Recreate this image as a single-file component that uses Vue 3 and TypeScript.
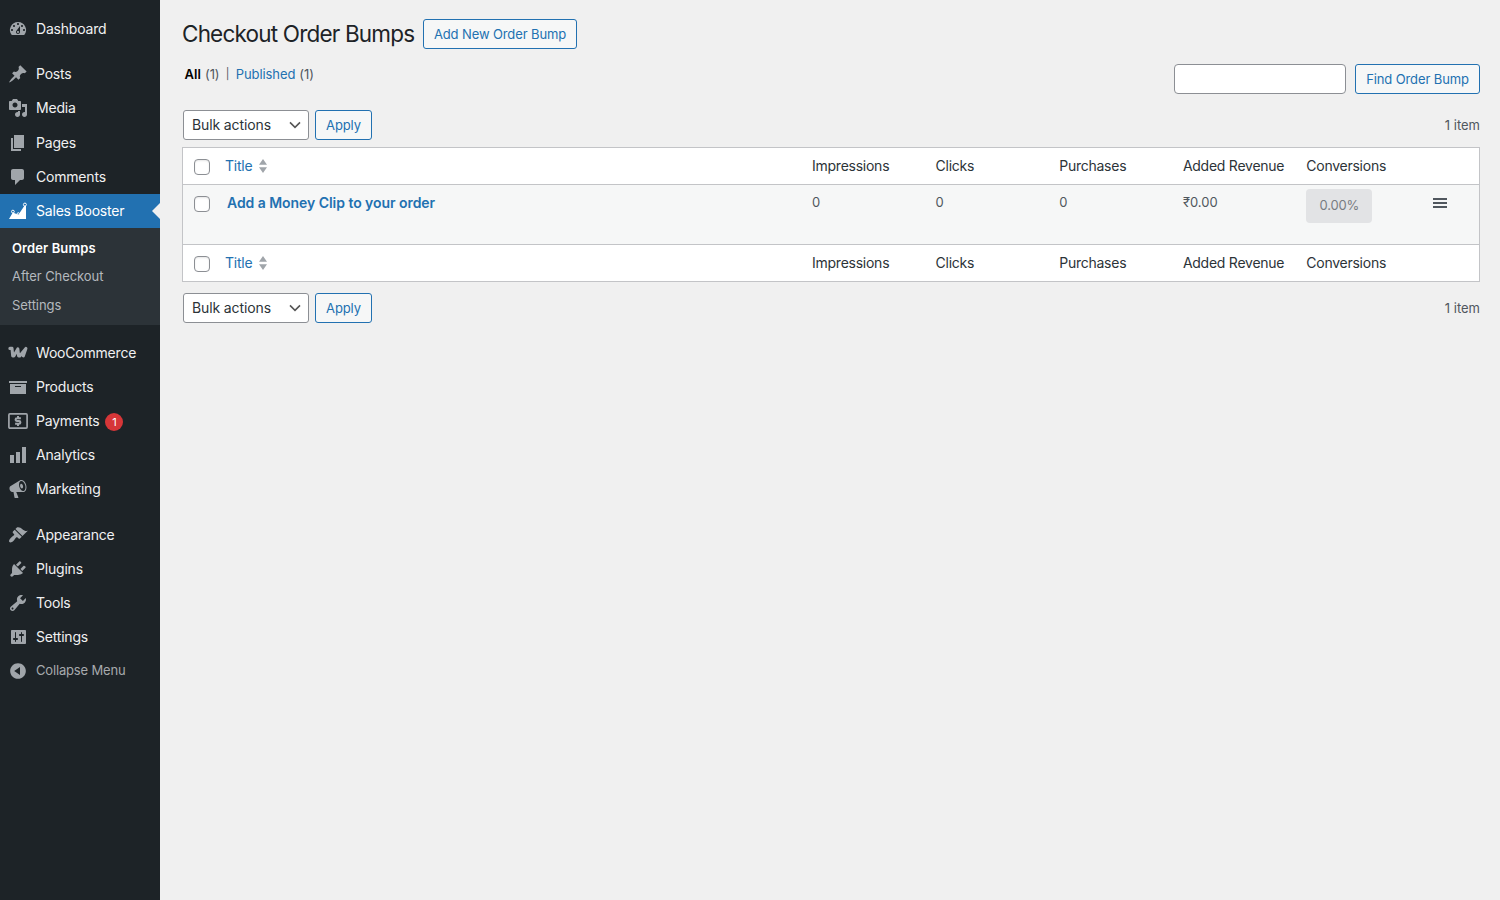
<script setup lang="ts">
interface MenuItem {
  label: string
  icon: string
  badge?: number
}

const icons: Record<string, string> = {
  dashboard:
    'M3.76 16h12.48A7.998 7.998 0 0 0 10 3a7.998 7.998 0 0 0-6.24 13zM10 4c.55 0 1 .45 1 1s-.45 1-1 1-1-.45-1-1 .45-1 1-1zM6 6c.55 0 1 .45 1 1s-.45 1-1 1-1-.45-1-1 .45-1 1-1zm8 0c.55 0 1 .45 1 1s-.45 1-1 1-1-.45-1-1 .45-1 1-1zm-5.37 5.55L12 7v6c0 1.1-.9 2-2 2s-2-.9-2-2c0-.57.24-1.08.63-1.45zM4 10c.55 0 1 .45 1 1s-.45 1-1 1-1-.45-1-1 .45-1 1-1zm12 0c.55 0 1 .45 1 1s-.45 1-1 1-1-.45-1-1 .45-1 1-1zm-5 3c0-.55-.45-1-1-1s-1 .45-1 1 .45 1 1 1 1-.45 1-1z',
  post: 'M10.44 3.02l1.82-1.82 6.36 6.35-1.83 1.82c-1.05-.68-2.48-.57-3.41.36l-.75.75c-.92.93-1.04 2.35-.35 3.41l-1.83 1.82-2.41-2.41-2.8 2.79c-.42.42-3.38 2.71-3.8 2.29s1.86-3.39 2.28-3.81l2.79-2.79L4.1 9.36l1.83-1.82c1.05.69 2.48.57 3.4-.36l.75-.75c.93-.92 1.05-2.35.36-3.41z',
  media:
    'M13 11V4c0-.55-.45-1-1-1h-1.67L9 1H5L3.67 3H2c-.55 0-1 .45-1 1v7c0 .55.45 1 1 1h10c.55 0 1-.45 1-1zM7 4.5c1.38 0 2.5 1.12 2.5 2.5S8.38 9.5 7 9.5 4.5 8.38 4.5 7 5.62 4.5 7 4.5zM14 6h5v10.5c0 1.38-1.12 2.5-2.5 2.5S14 17.88 14 16.5s1.12-2.5 2.5-2.5c.17 0 .34.02.5.05V9h-3V6zm-4 8.05V13h2v3.5c0 1.38-1.12 2.5-2.5 2.5S7 17.88 7 16.5 8.12 14 9.5 14c.17 0 .34.02.5.05z',
  page: 'M6 15V2h10v13H6zm-1 1h8v2H3V5h2v11z',
  comments: 'M5 2h9c1.1 0 2 .9 2 2v7c0 1.1-.9 2-2 2h-2l-5 5v-5H5c-1.1 0-2-.9-2-2V4c0-1.1.9-2 2-2z',
  archive: 'M19 4v2H1V4h18zM2 7h16v10H2V7zm11 3V9H7v1h6z',
  bars: 'M18 18V2h-4v16h4zm-6 0V7H8v11h4zm-6 0v-8H2v8h4z',
  megaphone:
    'M18.15 5.94c.46 1.62.38 3.22-.02 4.48-.42 1.28-1.26 2.18-2.3 2.48-.16.06-.26.06-.4.06-.06.02-.12.02-.18.02-.06.02-.14.02-.22.02h-6.8l2.22 5.5c.02.14-.06.26-.14.34-.08.1-.24.16-.34.16H6.95c-.1 0-.26-.06-.34-.16-.08-.08-.16-.2-.14-.34l-1-5.5H4.25l-.02-.02c-.5.06-1.08-.18-1.54-.62s-.88-1.08-1.06-1.88c-.24-.8-.2-1.56-.02-2.2.18-.62.58-1.08 1.06-1.3l.02-.02 9-5.4c.1-.06.18-.1.24-.16.06-.04.14-.08.24-.12.16-.08.28-.12.5-.18 1.04-.3 2.24.1 3.22.98s1.84 2.24 2.26 3.86zm-2.58 5.98h-.02c.4-.1.74-.34 1.04-.7.58-.7.86-1.76.86-3.04 0-.64-.1-1.3-.28-1.98-.34-1.36-1.02-2.5-1.78-3.24s-1.68-1.1-2.46-.88c-.82.22-1.4.96-1.7 2-.32 1.04-.28 2.36.06 3.72.38 1.36 1 2.5 1.8 3.24.78.74 1.62 1.1 2.48.88zm-2.54-7.08c.22-.04.42-.02.62.04.38.16.76.48 1.02 1s.42 1.2.42 1.78c0 .3-.04.56-.12.8-.18.48-.44.84-.86.94-.34.1-.8-.06-1.14-.4s-.64-.86-.78-1.5c-.18-.62-.12-1.24.02-1.72s.48-.84.82-.94z',
  appearance:
    'M14.48 11.06L7.41 3.99l1.5-1.5c.5-.56 2.3-.47 3.51.32 1.21.8 1.43 1.28 2.91 2.1 1.18.64 2.45 1.26 4.45.85zm-.71.71L6.7 4.7 4.93 6.47c-.39.39-.39 1.02 0 1.41l1.06 1.06c.39.39.39 1.03 0 1.42-.6.6-1.43 1.11-2.21 1.69-.35.26-.7.53-1.01.84C1.43 14.23.4 16.08 1.4 17.07c.99 1 2.84-.03 4.18-1.36.31-.31.58-.66.85-1.02.57-.78 1.08-1.61 1.69-2.21.39-.39 1.02-.39 1.41 0l1.06 1.06c.39.39 1.02.39 1.41 0z',
  plugins:
    'M13.11 4.36L9.87 7.6 8 5.73l3.24-3.24c.35-.34 1.05-.2 1.56.32.52.51.66 1.21.31 1.55zm-8 1.77l.91-1.12 9.01 9.01-1.19.84c-.71.71-2.63 1.16-3.82 1.16H6.14L4.9 17.26c-.59.59-1.54.59-2.12 0-.59-.58-.59-1.53 0-2.12l1.24-1.24v-3.88c0-1.13.4-3.19 1.09-3.89zm7.26 3.97l3.24-3.24c.34-.35 1.04-.21 1.55.31.52.51.66 1.21.31 1.55l-3.24 3.25z',
  tools:
    'M16.68 9.77c-1.34 1.34-3.3 1.67-4.95.99l-5.41 6.52c-.99.99-2.59.99-3.58 0s-.99-2.59 0-3.57l6.52-5.42c-.68-1.65-.35-3.61.99-4.95 1.28-1.28 3.12-1.62 4.72-1.06l-2.89 2.89 2.82 2.82 2.86-2.87c.53 1.58.18 3.39-1.08 4.65zM3.81 16.21c.4.39 1.04.39 1.43 0 .4-.4.4-1.04 0-1.43-.39-.4-1.03-.4-1.43 0-.39.39-.39 1.03 0 1.43z',
  settings:
    'M18 16V4c0-.55-.45-1-1-1H4c-.55 0-1 .45-1 1v12c0 .55.45 1 1 1h13c.55 0 1-.45 1-1zM8 11h1c.55 0 1 .45 1 1s-.45 1-1 1H8v1.5c0 .28-.22.5-.5.5s-.5-.22-.5-.5V13H6c-.55 0-1-.45-1-1s.45-1 1-1h1V5.5c0-.28.22-.5.5-.5s.5.22.5.5V11zm5-2h-1c-.55 0-1-.45-1-1s.45-1 1-1h1V5.5c0-.28.22-.5.5-.5s.5.22.5.5V7h1c.55 0 1 .45 1 1s-.45 1-1 1h-1v5.5c0 .28-.22.5-.5.5s-.5-.22-.5-.5V9z',
  collapse:
    'M10 2.16c4.33 0 7.84 3.51 7.84 7.84s-3.51 7.84-7.84 7.84S2.16 14.33 2.16 10 5.71 2.16 10 2.16zm2 11.72V6.12L6.18 9.97z',
}

const contentMenu: MenuItem[] = [
  { label: 'Posts', icon: 'post' },
  { label: 'Media', icon: 'media' },
  { label: 'Pages', icon: 'page' },
  { label: 'Comments', icon: 'comments' },
]
const storeMenu: MenuItem[] = [
  { label: 'WooCommerce', icon: 'woo' },
  { label: 'Products', icon: 'archive' },
  { label: 'Payments', icon: 'payments', badge: 1 },
  { label: 'Analytics', icon: 'bars' },
  { label: 'Marketing', icon: 'megaphone' },
]
const systemMenu: MenuItem[] = [
  { label: 'Appearance', icon: 'appearance' },
  { label: 'Plugins', icon: 'plugins' },
  { label: 'Tools', icon: 'tools' },
  { label: 'Settings', icon: 'settings' },
]
const groups = [
  { name: 'posts', items: contentMenu },
  { name: 'store', items: storeMenu },
  { name: 'system', items: systemMenu },
]
const submenu = ['Order Bumps', 'After Checkout', 'Settings']
const columns = ['Impressions', 'Clicks', 'Purchases', 'Added Revenue', 'Conversions']
const rowValues = ['0', '0', '0', '₹0.00']
</script>

<template>
  <div class="admin">
    <nav class="sidebar">
      <a class="item first">
        <svg class="icon" viewBox="0 0 20 20"><path :d="icons.dashboard" /></svg>
        <span>Dashboard</span>
      </a>
      <div v-for="group in groups" :key="group.name" class="group" :class="group.name">
        <a v-for="item in group.items" :key="item.label" class="item">
          <svg v-if="item.icon === 'woo'" class="icon" viewBox="0 0 20 20">
            <path
              class="woo"
              d="M1.9 5.4H4L4.7 12.9H5.8L9.8 5.9L10.6 12.9H11.7L17.9 5.4L15.3 12.9"
            />
          </svg>
          <svg v-else-if="item.icon === 'payments'" class="icon" viewBox="0 0 20 20">
            <rect class="line" x="0.9" y="2.9" width="18.2" height="14.2" rx="1" />
            <path class="dollar" d="M12.9 7.2H9Q7.6 7.2 7.6 8.6T9 10H11Q12.4 10 12.4 11.4T11 12.8H7.1M10 5V7.2M10 12.8V15" />
          </svg>
          <svg v-else class="icon" viewBox="0 0 20 20"><path :d="icons[item.icon]" /></svg>
          <span>{{ item.label }}</span>
          <span v-if="item.badge" class="badge">{{ item.badge }}</span>
        </a>
        <template v-if="group.name === 'posts'">
          <a class="item active">
            <svg class="icon" viewBox="0 0 20 20">
              <path d="M1 18L4.8 11.4L10.4 13.8L16.6 4.4H18V18Z" />
              <circle class="node" cx="4.9" cy="10.6" r="1.4" />
              <circle class="node" cx="10.3" cy="12.8" r="1.1" />
              <circle class="node" cx="16.9" cy="3.6" r="1.5" />
            </svg>
            <span>Sales Booster</span>
          </a>
          <div class="submenu">
            <a v-for="(label, i) in submenu" :key="label" :class="{ current: i === 0 }">{{ label }}</a>
          </div>
        </template>
      </div>
      <a class="item collapse">
        <svg class="icon" viewBox="0 0 20 20"><path :d="icons.collapse" /></svg>
        <span>Collapse Menu</span>
      </a>
    </nav>

    <main class="content">
      <header class="heading">
        <h1>Checkout Order Bumps</h1>
        <button class="button add">Add New Order Bump</button>
      </header>
      <div class="filters">
        <div class="views">
          <b>All</b><span class="count">(1)</span><span class="bar">|</span><a>Published</a><span class="count">(1)</span>
        </div>
        <div class="search">
          <input type="text" />
          <button class="button find">Find Order Bump</button>
        </div>
      </div>
      <template v-for="pos in ['top', 'bottom']" :key="pos">
        <div class="tablenav" :class="pos">
          <div class="select">
            <span>Bulk actions</span>
            <svg viewBox="0 0 12 8"><path d="M1 1.4L6 6.3L11 1.4" /></svg>
          </div>
          <button class="button apply">Apply</button>
          <span class="total">1 item</span>
        </div>
        <div v-if="pos === 'top'" class="table">
          <template v-for="edge in ['head', 'foot']" :key="edge">
            <div class="row labels">
              <span class="check"></span>
              <a class="title">
                Title
                <svg viewBox="0 0 8 14"><path d="M4 0L8 5.8H0ZM0 8.2H8L4 14Z" /></svg>
              </a>
              <span v-for="column in columns" :key="column">{{ column }}</span>
            </div>
            <div v-if="edge === 'head'" class="row entry">
              <span class="check"></span>
              <a class="title">Add a Money Clip to your order</a>
              <span v-for="(value, i) in rowValues" :key="i" class="value">{{ value }}</span>
              <span class="rate">0.00%</span>
              <svg class="handle" viewBox="0 0 14 10"><path d="M0 1H14M0 5H14M0 9H14" /></svg>
            </div>
          </template>
        </div>
      </template>
    </main>
  </div>
</template>

<style>
body {
  margin: 0;
  background: #f0f0f0;
}
</style>

<style scoped>
* {
  box-sizing: border-box;
}
.admin {
  display: flex;
  height: 900px;
  overflow: hidden;
  background: #f0f0f0;
  color: #50575e;
  font: 13px/20px Inter, 'Liberation Sans', sans-serif;
}
.sidebar {
  width: 160px;
  flex: none;
  padding-top: 12px;
  background: #1d2327;
}
.item {
  position: relative;
  display: flex;
  align-items: center;
  height: 34px;
  padding-left: 8px;
  color: #f0f0f1;
  font-size: 14px;
  letter-spacing: -0.2px;
}
.posts > .item:nth-child(2) {
  height: 35px;
  padding-bottom: 1px;
}
.icon {
  width: 20px;
  height: 20px;
  flex: none;
  margin-right: 8px;
  fill: #a0a5aa;
}
.woo,
.line,
.dollar {
  fill: none;
  stroke: #a0a5aa;
}
.woo {
  stroke-width: 3.1;
  stroke-linecap: round;
  stroke-linejoin: round;
}
.line {
  stroke-width: 1.7;
}
.dollar {
  stroke-width: 2;
}
.group {
  margin-top: 11px;
}
.group.system {
  margin-top: 12px;
}
.active {
  background: #2271b1;
  color: #fff;
}
.active .icon {
  fill: #fff;
}
.active::after {
  content: '';
  position: absolute;
  right: 0;
  top: 9px;
  border: 8px solid transparent;
  border-left: 0;
  border-right-color: #f0f0f0;
}
.node {
  fill: #2271b1;
  stroke: #fff;
  stroke-width: 1;
}
.submenu {
  display: flex;
  flex-direction: column;
  height: 97px;
  padding: 6px 12px;
  background: #2c3338;
  color: #b4b9be;
  font-size: 13px;
  line-height: 29px;
  letter-spacing: -0.07px;
}
.submenu .current {
  color: #fff;
  font-weight: 600;
  line-height: 28px;
  letter-spacing: 0.1px;
}
.submenu a:nth-child(2) {
  line-height: 28px;
  padding-bottom: 1px;
}
.badge {
  width: 18px;
  height: 18px;
  margin: 2px 0 0 6px;
  border-radius: 50%;
  background: #d63638;
  color: #fff;
  font-size: 11px;
  line-height: 18px;
  text-align: center;
}
.collapse {
  color: #a7aaad;
  font-size: 13px;
  letter-spacing: -0.17px;
}
.collapse span {
  margin-top: -2px;
}
main.content {
  flex: 1;
  padding: 19px 20px 0 22px;
}
.heading {
  display: flex;
  align-items: center;
  height: 30px;
}
h1 {
  width: 241px;
  margin: 0;
  color: #1d2327;
  font-size: 22.5px;
  font-weight: 400;
  line-height: 30px;
  white-space: nowrap;
  letter-spacing: -0.81px;
}
.button {
  height: 30px;
  padding: 1px 0 0;
  border: 1px solid #2271b1;
  border-radius: 3px;
  background: #f6f7f7;
  color: #2271b1;
  font: 13px/27px Inter, sans-serif;
  letter-spacing: -0.11px;
  white-space: nowrap;
}
.add {
  width: 154px;
}
.find {
  width: 125px;
}
.apply {
  width: 57px;
}
.filters {
  display: flex;
  justify-content: space-between;
  height: 61px;
  padding-top: 15px;
}
.views {
  display: flex;
  height: 20px;
  padding-left: 2.4px;
  letter-spacing: -0.08px;
}
.views b {
  color: #000;
  font-weight: 600;
  letter-spacing: 0.1px;
}
.views a,
a.title {
  color: #2271b1;
}
.count {
  margin-left: 4px;
}
.bar {
  margin: 0 6.3px;
  font-size: 11px;
}
.search {
  display: flex;
  gap: 9px;
}
input {
  width: 172px;
  height: 30px;
  border: 1px solid #8c8f94;
  border-radius: 4px;
  background: #fff;
}
.tablenav {
  display: flex;
  align-items: center;
  gap: 6px;
  height: 30px;
  padding-left: 1px;
}
.bottom {
  margin-top: 11px;
}
.select {
  display: flex;
  align-items: center;
  justify-content: space-between;
  width: 126px;
  height: 30px;
  padding: 0 7px 0 8px;
  border: 1px solid #8c8f94;
  border-radius: 3px;
  background: #fff;
  color: #2c3338;
  font-size: 14px;
  letter-spacing: -0.12px;
}
.select svg {
  width: 12px;
  height: 8px;
  fill: none;
  stroke: #555;
  stroke-width: 1.6;
}
.total {
  margin: -1px 0 0 auto;
}
.table {
  margin-top: 7px;
  border: 1px solid #c3c4c7;
  background: #fff;
}
.row {
  display: grid;
  grid-template-columns: 42px 587px 123.6px 123.6px 123.7px 123.4px 126.3px 1fr;
}
.labels {
  height: 36px;
  align-items: center;
  color: #2c3338;
  font-size: 14px;
  letter-spacing: -0.25px;
}
.check {
  width: 16px;
  height: 16px;
  margin: 2px 0 0 11px;
  border: 1px solid #8c8f94;
  border-radius: 4px;
  background: #fff;
  box-shadow: inset 0 1px 2px rgba(0, 0, 0, 0.1);
}
.labels .title {
  display: flex;
  align-items: center;
  gap: 7px;
}
.labels .title svg {
  width: 8px;
  height: 14px;
  fill: #a0a5aa;
}
.entry {
  height: 61px;
  padding-top: 8px;
  align-items: start;
  border: 1px solid #c3c4c7;
  border-width: 1px 0;
  background: #f6f7f7;
}
.entry .check {
  margin-top: 3px;
}
.entry .title {
  padding-left: 2px;
  font-size: 14px;
  font-weight: 600;
  letter-spacing: -0.05px;
}
.value {
  margin-top: -1px;
}
.entry .rate {
  width: 66px;
  height: 34px;
  margin-top: -4px;
  border-radius: 4px;
  background: #e2e3e5;
  color: #787c82;
  line-height: 33px;
  letter-spacing: -0.15px;
  text-align: center;
}
.handle {
  width: 14px;
  height: 10px;
  margin-top: 5px;
  stroke: #50575e;
  stroke-width: 2;
}
</style>
